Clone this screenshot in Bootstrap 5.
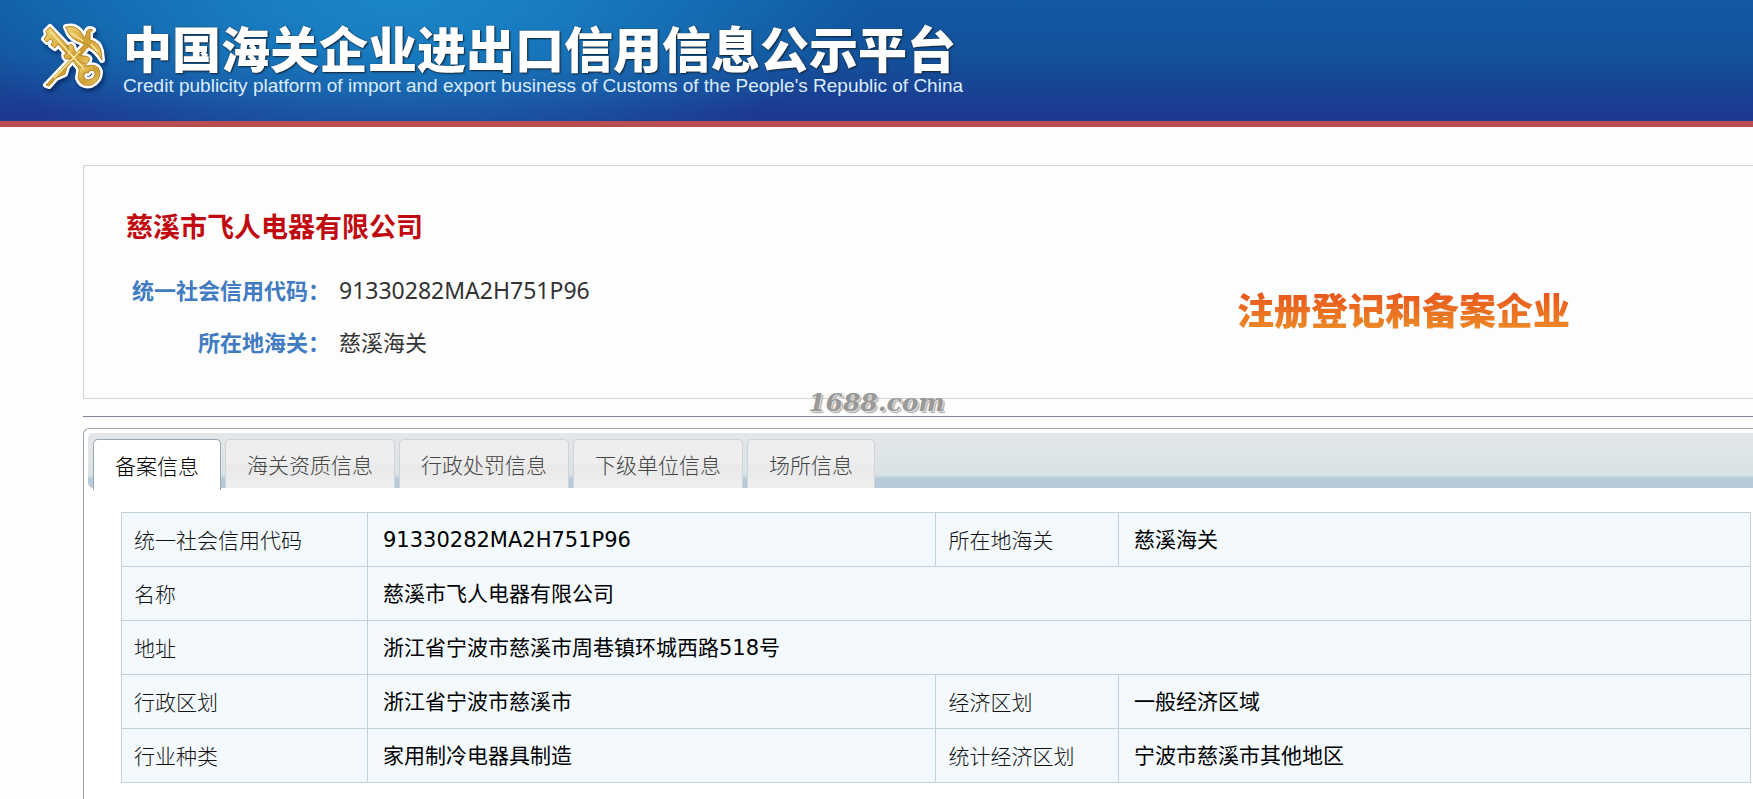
<!DOCTYPE html>
<html lang="zh-CN">
<head>
<meta charset="utf-8">
<meta name="viewport" content="width=device-width, initial-scale=1">
<title>中国海关企业进出口信用信息公示平台</title>
<link href="https://cdn.jsdelivr.net/npm/bootstrap@5.3.0/dist/css/bootstrap.min.css" rel="stylesheet">
<style>
  body { font-family: "Noto Sans", "Noto Sans CJK SC", sans-serif; background: #fdfdfd; color: #111; overflow-x: hidden; }
  .site-header {
    min-height: 127px; padding: 18px 40px 0; border-bottom: 6px solid #b94d50;
    background:
      radial-gradient(ellipse 480px 165px at 400px 0, #1a86c9 0%, rgba(26,134,201,.75) 35%, rgba(26,134,201,0) 100%),
      linear-gradient(#1159a2 0%, #12529b 45%, #1c3b90 90%);
  }
  .site-logo { width: 72px; height: 76px; margin-left: -3px; filter: drop-shadow(2px 3px 2px rgba(0,20,70,.6)); }
  .site-names { padding: 2px 0 0 14px; }
  .site-title { font: 900 49px/54px "Noto Sans CJK SC", sans-serif; color: #fff; text-shadow: 1px 1px 2px #123, 0 0 1px #345; margin: 0; }
  .site-sub { font: 19px/24px "Liberation Sans", sans-serif; color: #dcecff; margin: 0; }
  .page-body { padding: 38px 0 0 83px; }
  .summary { border: 1px solid #d0d2d4; border-right: 0; border-radius: 0; background: transparent; min-height: 234px; padding: 38px 0 28px 42px; }
  .company { font-size: 27px; font-weight: 700; line-height: 46px; color: #c00a10; margin: 0 0 14px; }
  .facts { font-size: 22px; line-height: 52px; color: #333; margin: 0; }
  .facts dt { width: 204px; text-align: right; color: #417bc1; font-weight: 700; }
  .facts dd { margin: 0 0 0 9px; }
  .facts .code { font-size: 23px; }
  .stamp { margin: 0 135px 14px 0; padding: 0 48px 0 51px; background: #fbfdff; }
  .stamp span { display: block; font: 900 37px/94px "Noto Sans CJK SC", sans-serif; background: linear-gradient(#e8531c 30%, #ec8a26 72%); -webkit-background-clip: text; background-clip: text; color: transparent; }
  .divider { margin-top: 17px; border-top: 1px solid #85809c; }
  .watermark { left: 50vw; transform: translateX(-50%); bottom: -4px; margin-left: -83px; font: italic 700 25px/36px "DejaVu Serif", serif; color: #999; text-shadow: 1px 1px 0 #ddd, 2px 2px 1px #aaa; }
  .records { margin-top: 11px; border: 1px solid #9fa2a6; border-width: 1px 0 0 1px; border-radius: 6px 0 0 0; padding: 4px 0 0 4px; background: #fff; }
  .tab-strip { border: 0; gap: 4px; padding: 6px 0 0 5px; height: 55px; border-radius: 5px 0 0 5px; background: linear-gradient(#e3e7ea 0, #d9e2e6 42px, #c6d6de 44px, #b6cad9 45px, #b6cad9 100%); }
  .tab-strip .nav-link { height: 49px; margin: 0; padding: 0 21px; border: 1px solid #ced4d8; border-bottom: 0; border-radius: 5px 5px 0 0; font-family: "Noto Sans CJK SC", sans-serif; font-size: 21px; line-height: 48px; font-weight: 300; color: #444; background: linear-gradient(#eeeeee 50%, #e8e8e8 52%, #efefef); }
  .tab-strip .nav-link.active { height: 51px; color: #000; background: #fff; border-color: #9aa6b0; }
  .detail-wrap { padding: 24px 2px 18px 33px; }
  .detail { --bs-table-bg: #f3f9fd; width: 100%; margin: 0; table-layout: fixed; font-size: 21px; line-height: 30px; border: 1px solid #c0d2dc; }
  .detail th, .detail td { height: 54px; padding: 0 15px; vertical-align: middle; border: 1px solid #c0d2dc; }
  .detail th { padding: 0 12px 2px; font-family: "Noto Sans CJK SC", sans-serif; font-weight: 300; color: #111; }
  .detail td { color: #000; font-family: "DejaVu Sans", "Noto Sans CJK SC", sans-serif; }
  .c1 { width: 15.1%; } .c2 { width: 34.9%; } .c3 { width: 11.2%; }
</style>
</head>
<body class="d-flex flex-column min-vh-100">
<header class="site-header d-flex align-items-start">
  <svg class="site-logo flex-shrink-0" viewBox="0 0 72 76" aria-hidden="true">
    <defs>
      <linearGradient id="gold" x1="0" y1="0" x2="1" y2="1"><stop offset="0" stop-color="#f3d774"/><stop offset=".5" stop-color="#cf9e33"/><stop offset="1" stop-color="#eccb60"/></linearGradient>
      <g id="emblem" stroke-linejoin="round" stroke-linecap="round">
        <path d="M29 9q9-2 14 4l5 7 2-7q2-3 6-1l-3 2v8q9 2 11 11l1 9q-5-9-13-13l-9-5q-8-3-11-8Z"/>
        <path d="m48 26-36 38-3 3 3 1 7-8 9-4 2-7 7-8 8-5 7-8Z"/>
        <path d="m9 13 4-4 40 42-6 5-26-30-3 4-4-3 2-4-3-2-3 3-3-3 3-4Z"/>
        <path fill-rule="evenodd" d="M42 49q3 2 7-1 12-3 14 6 0 9-9 13-10 2-13-7l1-6Zm5 7q-1 6 5 6 7-2 6-8-4-4-7 1-2-2-4 1Z"/>
        <path d="M31 28q5-4 6 3 1 5 9 7 8 0 6 5-3 5-8 1-5-5-12-3-5 1-5-4 6-2 4-9Z"/>
      </g>
    </defs>
    <use href="#emblem" fill="#fff" stroke="#fff" stroke-width="6"/>
    <use href="#emblem" fill="url(#gold)" stroke="#ba8325" stroke-width="1"/>
    <path d="m13 13 34 38M34 15l12 8M54 26l7 8M17 60l26-27" fill="none" stroke="#faeaa0" stroke-width="1.5"/>
  </svg>
  <div class="site-names text-nowrap">
    <h1 class="site-title">中国海关企业进出口信用信息公示平台</h1>
    <p class="site-sub">Credit publicity platform of import and export business of Customs of the People's Republic of China</p>
  </div>
</header>

<main class="page-body d-flex flex-column flex-grow-1">
  <section class="summary card flex-row justify-content-between align-items-start">
    <div>
      <h2 class="company">慈溪市飞人电器有限公司</h2>
      <dl class="facts">
        <div class="d-flex"><dt>统一社会信用代码：</dt><dd class="code">91330282MA2H751P96</dd></div>
        <div class="d-flex"><dt>所在地海关：</dt><dd>慈溪海关</dd></div>
      </dl>
    </div>
    <div class="stamp align-self-end"><span>注册登记和备案企业</span></div>
  </section>
  <div class="divider position-relative"><span class="watermark position-absolute">1688.com</span></div>

  <section class="records flex-grow-1">
    <ul class="nav nav-tabs tab-strip" role="tablist">
      <li class="nav-item"><button class="nav-link active" type="button" role="tab" aria-selected="true">备案信息</button></li>
      <li class="nav-item"><button class="nav-link" type="button" role="tab">海关资质信息</button></li>
      <li class="nav-item"><button class="nav-link" type="button" role="tab">行政处罚信息</button></li>
      <li class="nav-item"><button class="nav-link" type="button" role="tab">下级单位信息</button></li>
      <li class="nav-item"><button class="nav-link" type="button" role="tab">场所信息</button></li>
    </ul>
    <div class="detail-wrap">
      <table class="table detail">
        <colgroup><col class="c1"><col class="c2"><col class="c3"><col></colgroup>
        <tbody>
          <tr><th scope="row">统一社会信用代码</th><td>91330282MA2H751P96</td><th scope="row">所在地海关</th><td>慈溪海关</td></tr>
          <tr><th scope="row">名称</th><td colspan="3">慈溪市飞人电器有限公司</td></tr>
          <tr><th scope="row">地址</th><td colspan="3">浙江省宁波市慈溪市周巷镇环城西路518号</td></tr>
          <tr><th scope="row">行政区划</th><td>浙江省宁波市慈溪市</td><th scope="row">经济区划</th><td>一般经济区域</td></tr>
          <tr><th scope="row">行业种类</th><td>家用制冷电器具制造</td><th scope="row">统计经济区划</th><td>宁波市慈溪市其他地区</td></tr>
        </tbody>
      </table>
    </div>
  </section>
</main>
<script src="https://cdn.jsdelivr.net/npm/bootstrap@5.3.0/dist/js/bootstrap.bundle.min.js"></script>
</body>
</html>
